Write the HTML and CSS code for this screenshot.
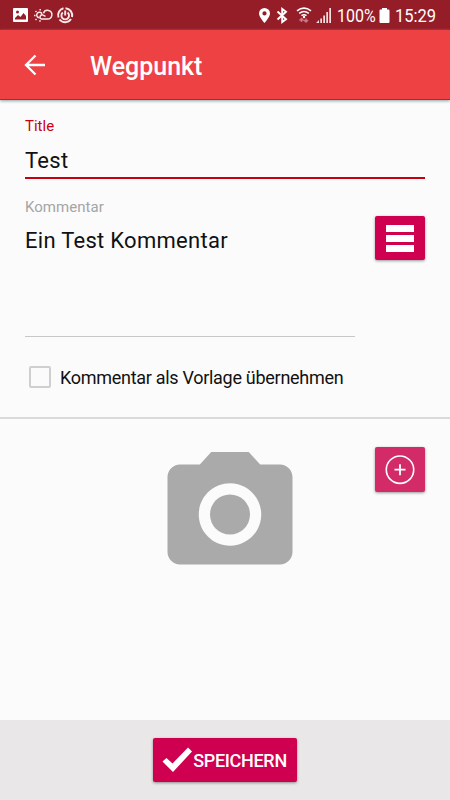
FILE: index.html
```html
<!DOCTYPE html>
<html lang="de">
<head>
<meta charset="utf-8">
<title>Wegpunkt</title>
<link rel="stylesheet" href="styles.css">
</head>
<body>
<div class="status">
  <svg class="status-left" width="64" height="30" viewBox="0 0 64 30">
    <path fill="#fff" fill-rule="evenodd" d="M1 8H14Q15 8 15 9V21Q15 22 14 22H1Q0 22 0 21V9Q0 8 1 8ZM2 19.500H13V16L10.500 13L7.500 17L5 15L2 18ZM4.500 10.500A1.500 1.500 0 1 0 4.500 13.500A1.500 1.500 0 1 0 4.500 10.500Z"/>
    <g fill="none" stroke="#fbe9ea" stroke-width="1.500">
      <path d="M29 13.800A2.800 2.800 0 1 0 26 17.800"/>
      <path d="M28 19H34.500A4.300 4.300 0 1 0 30.500 13.300M28 19A2.200 2.200 0 0 1 30.500 15.300L32.500 16.300"/>
      <path d="M21 15.500H22.500M22.500 11L23.500 12M27.200 9V10.500M22.500 20L23.500 19M27 20.200V21.700"/>
      <path stroke-width="2" d="M50.500 8.300A7.100 7.100 0 0 0 45.500 17.500M46.500 19.500A7.100 7.100 0 0 0 58 19M59 17A7.100 7.100 0 0 0 52.500 8.200"/>
      <path stroke-width="1.900" d="M49.800 12.600A3.800 3.800 0 1 0 54.600 12.600M52.200 10.500V15.500"/>
    </g>
  </svg>
  <svg class="status-icons" width="76" height="30" viewBox="258 0 76 30">
    <path fill="#fff" fill-rule="evenodd" d="M264.500 8A5.500 5.500 0 0 0 259 13.500C259 17 264.500 23 264.500 23S270 17 270 13.500A5.500 5.500 0 0 0 264.500 8ZM264.500 11.300A2.100 2.100 0 1 1 264.500 15.500A2.100 2.100 0 1 1 264.500 11.300Z"/>
    <path fill="none" stroke="#fff" stroke-width="1.900" d="M277.500 11.500L286 19.200L282.200 22V9L286 11.800L277.500 19.500"/>
    <path fill="none" stroke="#fff" stroke-width="1.600" d="M297 10.800Q304 5.500 311 10.800M299.200 13.300Q304 9.700 308.800 13.300M301.500 15.700Q304 13.900 306.500 15.700"/>
    <circle cx="304" cy="17" r="1.200" fill="#fff"/>
    <path fill="none" stroke="#c77a82" stroke-width="1.500" d="M301.500 22V18.500M299.500 20.500L301.500 18.500L303.500 20.500M306 18.500V22M304 20L306 22L308 20"/>
    <path fill="#f4dfe0" d="M316 23L319 20V23ZM320.300 18.500H322V23H320.300ZM323.300 15.500H325V23H323.300ZM326.300 12H328V23H326.300ZM329.300 8H331V23H329.300Z"/>
  </svg>
  <span class="percent">100%</span>
  <svg class="battery" width="11" height="15" viewBox="0 0 11 15"><path fill="#fff" d="M3 0H8V1.500H9.500Q10.500 1.500 10.500 2.500V14Q10.500 15 9.500 15H1.500Q.5 15 .5 14V2.500Q.5 1.500 1.500 1.500H3Z"/></svg>
  <span class="time">15:29</span>
</div>
<header class="bar">
  <svg class="back" width="22" height="22" viewBox="0 0 22 22"><path fill="none" stroke="#fff" stroke-width="2.300" d="M21 11H2M11.500 1.500L2 11L11.500 20.500"/></svg>
  <h1>Wegpunkt</h1>
</header>
<main>
  <section class="form">
    <label class="label label-active">Title</label>
    <div class="field field-title">Test</div>
    <div class="comment-row">
      <div class="comment">
        <label class="label label-comment">Kommentar</label>
        <div class="field field-comment">Ein Test Kommentar</div>
      </div>
      <button class="btn btn-list"><span class="line"></span><span class="line"></span><span class="line"></span></button>
    </div>
    <div class="check-row"><span class="box"></span><span class="check-text">Kommentar als Vorlage übernehmen</span></div>
  </section>
  <section class="photo">
    <svg class="camera" width="150" height="150" viewBox="0 0 24 24" fill="#aaa"><circle cx="12" cy="11.920" r="3.200"/><path transform="translate(0 -.08)" d="M9 2L7.170 4H4c-1.100 0-2 .9-2 2v12c0 1.100.9 2 2 2h16c1.100 0 2-.9 2-2V6c0-1.100-.9-2-2-2h-3.170L15 2H9zm3 15c-2.760 0-5-2.240-5-5s2.240-5 5-5 5 2.240 5 5-2.240 5-5 5z"/></svg>
    <button class="btn btn-add"><svg width="30" height="30" viewBox="0 0 30 30" fill="none" stroke="#fff"><circle cx="15" cy="14.700" r="13.700" stroke-width="1.600"/><path stroke-width="1.800" d="M9.500 14.700H20.500M15 9.200V20.200"/></svg></button>
  </section>
</main>
<footer>
  <button class="btn btn-save"><svg width="31" height="26" viewBox="0 0 31 26"><path fill="#fff" d="M.5 14.500L4.500 11L10.500 16.500L26 .5L30 4.500L11 25Z"/></svg><span class="save-text">SPEICHERN</span></button>
</footer>
</body>
</html>
```
FILE: styles.css
```css
* { box-sizing: border-box; }
body {
  margin: 0;
  width: 450px;
  height: 800px;
  display: flex;
  flex-direction: column;
  overflow: hidden;
  background: #fbfbfb;
  color: #111;
  font-family: Roboto, sans-serif;
}
svg { display: block; flex: none; }
.status {
  height: 30px;
  flex: none;
  display: flex;
  align-items: center;
  padding: 0 14px 0 13px;
  background: #951d28;
  color: #fff;
  white-space: nowrap;
}
.status-icons { margin-left: auto; }
.percent { width: 41px; margin-left: 3px; font-size: 18px; line-height: 30px; transform: scaleX(.89); transform-origin: left; padding-top: 2px; }
.battery { margin: 1px 0 0 1px; }
.time { width: 41px; margin-left: 5px; font-size: 19px; line-height: 30px; padding-top: 2px; transform: scaleX(.87); transform-origin: left; }
.bar {
  height: 70px;
  flex: none;
  display: flex;
  align-items: center;
  padding-left: 24px;
  background: #ee4144;
  border-bottom: 1px solid #d8141c;
  box-shadow: 0 1px 3px #8f9f9f;
  color: #fff;
  z-index: 1;
}
h1 { margin: 4px 0 0 44px; font-size: 25px; line-height: 30px; font-weight: 500; }
main { flex: 1; }
.form { height: 319px; padding: 16px 25px 0; border-bottom: 2px solid #dadada; }
.label { display: block; height: 20px; font-size: 15px; line-height: 20px; color: #a5a5a5; }
.label-active { color: #cc0011; }
.label-comment { line-height: 22px; letter-spacing: .05px; }
.field { font-size: 22px; line-height: 28px; letter-spacing: .28px; }
.field-title { height: 43px; padding-top: 11px; border-bottom: 2px solid #c60010; }
.comment-row { display: flex; justify-content: space-between; padding-top: 17px; }
.comment { width: 330px; }
.field-comment { height: 121px; padding-top: 11px; border-bottom: 1px solid #c8c8c8; }
.btn {
  display: flex;
  align-items: center;
  justify-content: center;
  width: 50px;
  height: 45px;
  padding: 0;
  border: 0;
  border-radius: 2px;
  background: #d00050;
  box-shadow: 0 1px 3px rgba(0, 0, 0, .4);
  color: #fff;
  font-family: inherit;
}
.btn-list { height: 44px; flex-direction: column; gap: 3px; margin-top: 20px; }
.line { width: 28px; height: 7px; background: #fff; }
.check-row { display: flex; align-items: center; height: 24px; margin-top: 28px; padding-left: 4px; }
.box { width: 22px; height: 22px; border: 2px solid #cfcfcf; border-radius: 2px; }
.check-text { margin: 2px 0 0 9px; font-size: 18px; line-height: 24px; letter-spacing: -.29px; white-space: nowrap; }
.photo { display: flex; padding: 21px 25px 0 155px; justify-content: space-between; }
.btn-add { margin-top: 7px; background: #d32b68; }
footer { height: 80px; flex: none; display: flex; justify-content: center; padding-top: 18px; background: #e9e7e8; }
.btn-save { width: 144px; height: 44px; padding-right: 1px; }
.save-text { font-size: 18px; font-weight: 500; letter-spacing: -.3px; }
```
